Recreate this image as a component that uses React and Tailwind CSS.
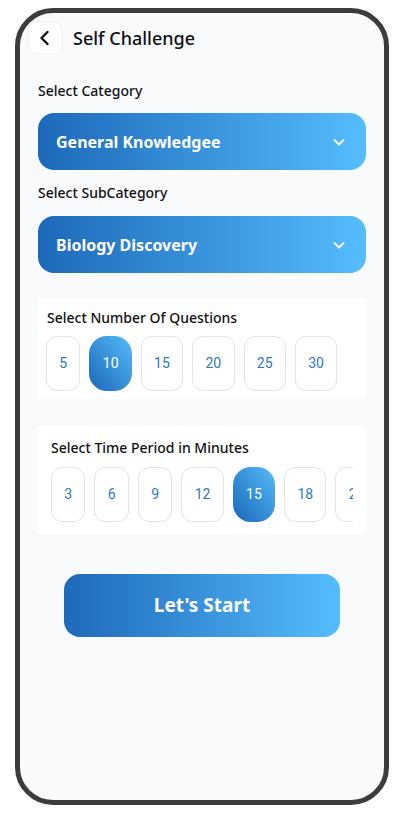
import React, { useState } from "react";

const questionCounts = [5, 10, 15, 20, 25, 30];
const timePeriods = [3, 6, 9, 12, 15, 18, 21];

function ChevronDown() {
  return (
    <svg width="14" height="14" viewBox="0 0 14 14" fill="none">
      <path d="M2.5 5l4.5 4.5L11.5 5" stroke="white" strokeWidth="1.8" strokeLinecap="round" strokeLinejoin="round" />
    </svg>
  );
}

function Dropdown({ label }) {
  return (
    <div className="flex items-center justify-between h-[57px] rounded-[16px] bg-gradient-to-r from-[#1e69ba] to-[#55bdfd] pl-[18px] pr-[20px]">
      <span className="text-white text-[16px] font-bold">{label}</span>
      <ChevronDown />
    </div>
  );
}

function Chip({ value, selected, onClick }) {
  if (selected) {
    return (
      <button
        onClick={onClick}
        className="shrink-0 h-[55px] px-[13.3px] rounded-[18px] bg-gradient-to-tr from-[#1c67b9] to-[#55bcfa] text-white text-[14px] font-['Roboto',sans-serif]"
      >
        {value}
      </button>
    );
  }
  return (
    <button
      onClick={onClick}
      className="shrink-0 h-[55px] px-[12.3px] rounded-[11px] border border-[#e4e4e4] bg-white text-[#2d78c9] text-[14px] font-['Roboto',sans-serif]"
    >
      {value}
    </button>
  );
}

export default function App() {
  const [questions, setQuestions] = useState(10);
  const [time, setTime] = useState(15);

  return (
    <div className="w-[404px] h-[814px] bg-white pt-[8px] pl-[15px] font-['Noto_Sans',sans-serif] text-[#111]">
      <div className="w-[374px] h-[797px] rounded-[38px] border-[5px] border-[#3c3c3c] bg-[#f9fafc] overflow-hidden">
        {/* header */}
        <div className="flex items-center pt-[10px] pl-[9px]">
          <button className="w-[32px] h-[30px] flex items-center justify-center bg-white rounded-[5px] shadow-[0_0_2px_rgba(0,0,0,0.12)]">
            <svg width="14" height="16" viewBox="0 0 14 16" fill="none">
              <path d="M9.5 2L3.5 8l6 6" stroke="#111" strokeWidth="2.4" strokeLinecap="round" strokeLinejoin="round" />
            </svg>
          </button>
          <h1 className="ml-[12px] text-[18px] font-medium leading-[30px]">Self Challenge</h1>
        </div>

        <div className="px-[18px]">
          <p className="mt-[28px] text-[14px] font-medium leading-[20px]">Select Category</p>
          <div className="mt-[12px]">
            <Dropdown label="General Knowledgee" />
          </div>

          <p className="mt-[13px] text-[14px] font-medium leading-[20px]">Select SubCategory</p>
          <div className="mt-[13px]">
            <Dropdown label="Biology Discovery" />
          </div>

          {/* number of questions */}
          <div className="mt-[26px] bg-white px-[8px] pt-[9px] pb-[8px]">
            <p className="pl-px text-[14px] font-medium leading-[20px]">Select Number Of Questions</p>
            <div className="mt-[8px] flex gap-[9px]">
              {questionCounts.map((q) => (
                <Chip key={q} value={q} selected={q === questions} onClick={() => setQuestions(q)} />
              ))}
            </div>
          </div>

          {/* time period */}
          <div className="mt-[27px] bg-white px-[13px] pt-[12px] pb-[12px]">
            <p className="text-[14px] font-medium leading-[20px]">Select Time Period in Minutes</p>
            <div className="mt-[9px] flex gap-[9px] overflow-hidden">
              {timePeriods.map((t) => (
                <Chip key={t} value={t} selected={t === time} onClick={() => setTime(t)} />
              ))}
            </div>
          </div>

          <div className="mt-[40px] flex justify-center">
            <button className="w-[276px] h-[63px] rounded-[16px] bg-gradient-to-r from-[#1e69ba] to-[#55bdfd] text-white text-[19px] font-bold">
              Let's Start
            </button>
          </div>
        </div>
      </div>
    </div>
  );
}
